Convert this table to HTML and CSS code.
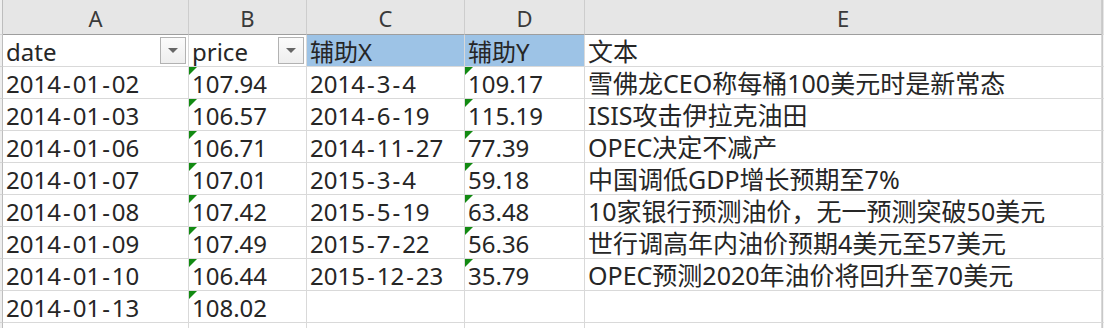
FILE: index.html
```html
<!DOCTYPE html>
<html lang="zh-CN">
<head>
<meta charset="utf-8">
<title>Sheet</title>
<link rel="stylesheet" href="styles.css">
</head>
<body>
<div class="sheet">
  <div class="hd stub"></div>
  <div class="hd">A</div>
  <div class="hd">B</div>
  <div class="hd">C</div>
  <div class="hd">D</div>
  <div class="hd">E</div>
  <div class="hd tail"></div>

  <div class="stub"></div>
  <div class="c"><span class="txt">date</span><span class="filter"></span></div>
  <div class="c"><span class="txt">price</span><span class="filter"></span></div>
  <div class="c blue"><span class="txt">辅助X</span></div>
  <div class="c blue"><span class="txt">辅助Y</span></div>
  <div class="c cjk"><span class="txt">文本</span></div>
  <div class="tail"></div>

  <div class="stub"></div>
  <div class="c"><span class="txt">2014<i>-</i>01<i>-</i>02</span></div>
  <div class="c flag"><span class="txt">107.94</span></div>
  <div class="c"><span class="txt">2014<i>-</i>3<i>-</i>4</span></div>
  <div class="c flag"><span class="txt">109.17</span></div>
  <div class="c cjk"><span class="txt">雪佛龙CEO称每桶100美元时是新常态</span></div>
  <div class="tail"></div>

  <div class="stub"></div>
  <div class="c"><span class="txt">2014<i>-</i>01<i>-</i>03</span></div>
  <div class="c flag"><span class="txt">106.57</span></div>
  <div class="c"><span class="txt">2014<i>-</i>6<i>-</i>19</span></div>
  <div class="c flag"><span class="txt">115.19</span></div>
  <div class="c cjk"><span class="txt">ISIS攻击伊拉克油田</span></div>
  <div class="tail"></div>

  <div class="stub"></div>
  <div class="c"><span class="txt">2014<i>-</i>01<i>-</i>06</span></div>
  <div class="c flag"><span class="txt">106.71</span></div>
  <div class="c"><span class="txt">2014<i>-</i>11<i>-</i>27</span></div>
  <div class="c flag"><span class="txt">77.39</span></div>
  <div class="c cjk"><span class="txt">OPEC决定不减产</span></div>
  <div class="tail"></div>

  <div class="stub"></div>
  <div class="c"><span class="txt">2014<i>-</i>01<i>-</i>07</span></div>
  <div class="c flag"><span class="txt">107.01</span></div>
  <div class="c"><span class="txt">2015<i>-</i>3<i>-</i>4</span></div>
  <div class="c flag"><span class="txt">59.18</span></div>
  <div class="c cjk"><span class="txt">中国调低GDP增长预期至7%</span></div>
  <div class="tail"></div>

  <div class="stub"></div>
  <div class="c"><span class="txt">2014<i>-</i>01<i>-</i>08</span></div>
  <div class="c flag"><span class="txt">107.42</span></div>
  <div class="c"><span class="txt">2015<i>-</i>5<i>-</i>19</span></div>
  <div class="c flag"><span class="txt">63.48</span></div>
  <div class="c cjk"><span class="txt">10家银行预测油价，无一预测突破50美元</span></div>
  <div class="tail"></div>

  <div class="stub"></div>
  <div class="c"><span class="txt">2014<i>-</i>01<i>-</i>09</span></div>
  <div class="c flag"><span class="txt">107.49</span></div>
  <div class="c"><span class="txt">2015<i>-</i>7<i>-</i>22</span></div>
  <div class="c flag"><span class="txt">56.36</span></div>
  <div class="c cjk"><span class="txt">世行调高年内油价预期4美元至57美元</span></div>
  <div class="tail"></div>

  <div class="stub"></div>
  <div class="c"><span class="txt">2014<i>-</i>01<i>-</i>10</span></div>
  <div class="c flag"><span class="txt">106.44</span></div>
  <div class="c"><span class="txt">2015<i>-</i>12<i>-</i>23</span></div>
  <div class="c flag"><span class="txt">35.79</span></div>
  <div class="c cjk"><span class="txt">OPEC预测2020年油价将回升至70美元</span></div>
  <div class="tail"></div>

  <div class="stub"></div>
  <div class="c"><span class="txt">2014<i>-</i>01<i>-</i>13</span></div>
  <div class="c flag"><span class="txt">108.02</span></div>
  <div class="c"></div>
  <div class="c"></div>
  <div class="c"></div>
  <div class="tail"></div>

  <div class="stub"></div>
  <div class="c"></div>
  <div class="c"></div>
  <div class="c"></div>
  <div class="c"></div>
  <div class="c"></div>
  <div class="tail"></div>
</div>
</body>
</html>
```

FILE: styles.css
```css
* { box-sizing: border-box; }

html, body {
  margin: 0;
  padding: 0;
  background: #ffffff;
  overflow: hidden;
}

body { height: 328px; }

.sheet {
  display: grid;
  grid-template-columns: 3px 186px 118px 158px 120px 517px 2px;
  grid-template-rows: 35px repeat(10, 32px);
  height: 328px;
  overflow: hidden;
  font-family: "Noto Sans", "Noto Sans CJK SC", sans-serif;
  font-size: 24px;
  color: #262626;
}

.hd {
  background: #e6e6e6;
  border-right: 1px solid #cdcdcd;
  border-bottom: 1px solid #9e9e9e;
  display: flex;
  align-items: center;
  justify-content: center;
  font-size: 22px;
  color: #3a3a3a;
  padding-top: 1px;
}

.hd.stub { border-right-color: #bdbdbd; }
.hd.tail { border-right: none; background: #e6e6e6; }

.stub {
  background: #eeeeee;
  border-right: 1px solid #bdbdbd;
  border-bottom: 1px solid #d4d4d4;
}

.tail {
  background: #f4f4f4;
  border-left: 1px solid #c8c8c8;
  border-bottom: 1px solid #dedede;
}

.c {
  position: relative;
  display: flex;
  align-items: flex-end;
  justify-content: space-between;
  border-right: 1px solid #d9d9d9;
  border-bottom: 1px solid #d9d9d9;
  padding: 0 2px 0 3px;
  white-space: nowrap;
  overflow: hidden;
}

.txt {
  line-height: 31px;
  height: 31px;
  padding-top: 1px;
}

.txt i {
  font-style: normal;
  margin: 0 2px;
}

.cjk { font-size: 25px; }

.blue { background: #9dc3e6; }

.filter {
  align-self: center;
  width: 26px;
  height: 27px;
  border: 1px solid #b2b2b2;
  background: linear-gradient(#fbfbfb, #eeeeee);
  display: flex;
  align-items: center;
  justify-content: center;
  margin-bottom: 1px;
}

.filter::after {
  content: "";
  width: 0;
  height: 0;
  border-left: 5px solid transparent;
  border-right: 5px solid transparent;
  border-top: 5px solid #666666;
}

.flag::before {
  content: "";
  position: absolute;
  left: 0;
  top: 0;
  width: 0;
  height: 0;
  border-top: 8px solid #128a12;
  border-right: 8px solid transparent;
}
```
